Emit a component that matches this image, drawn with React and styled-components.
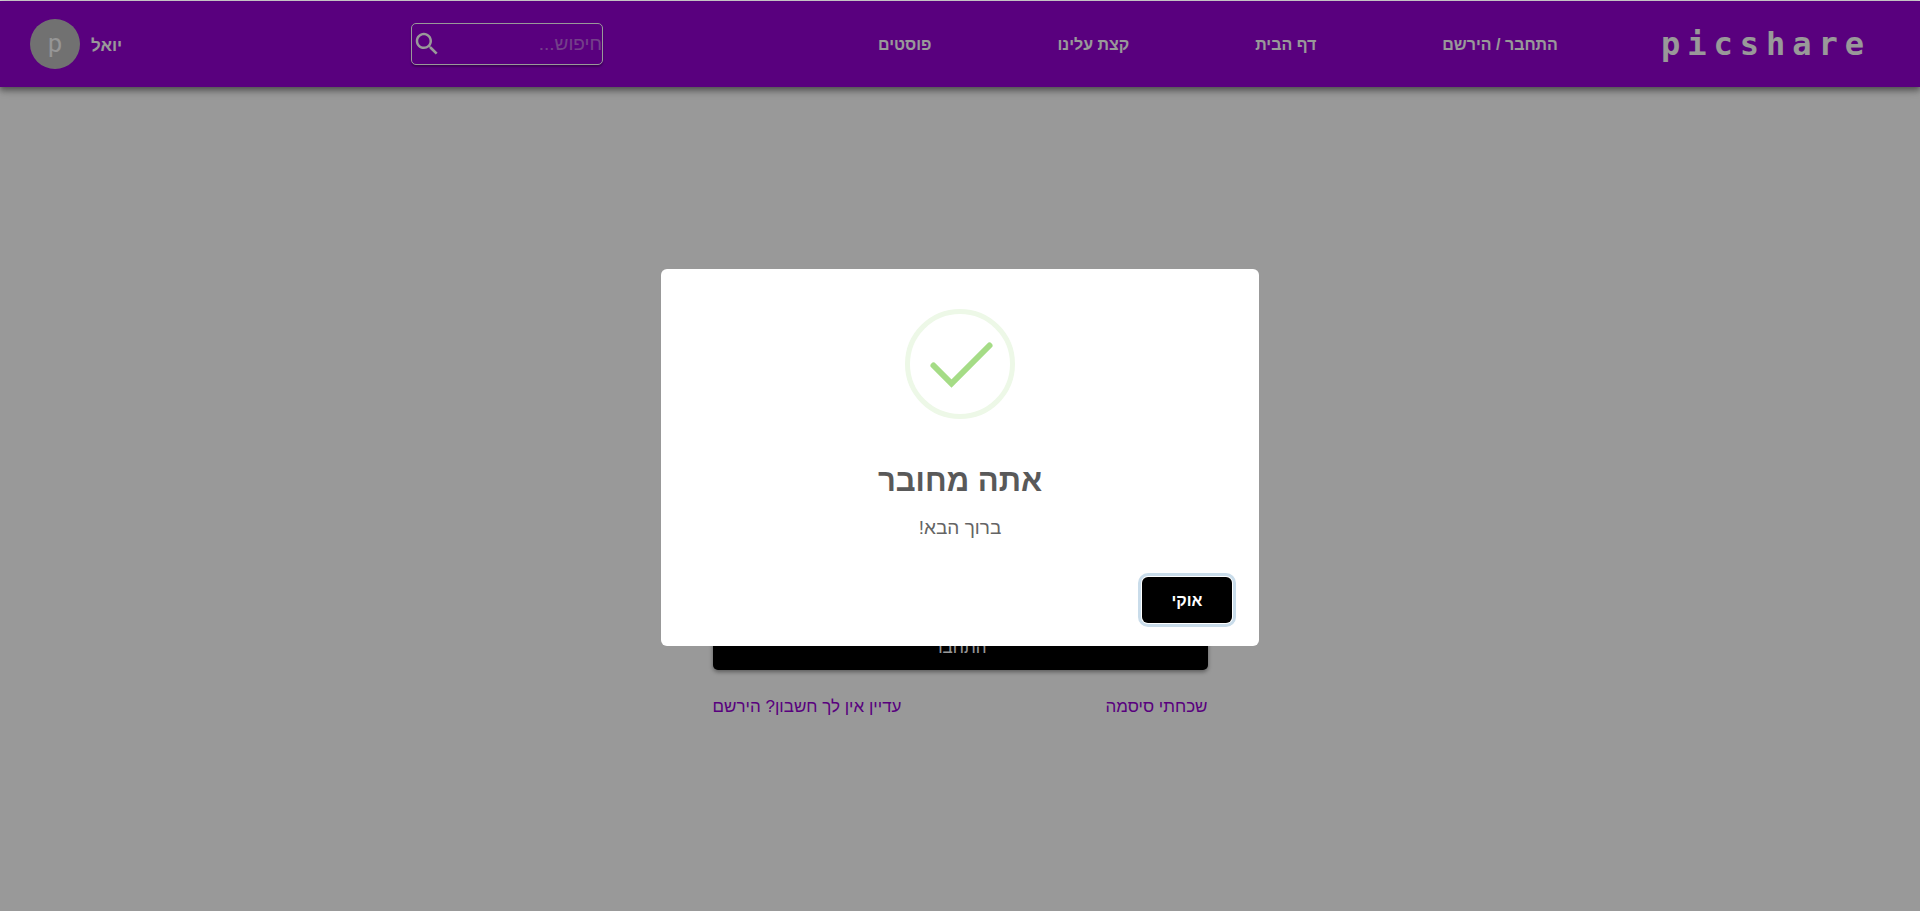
import React from "react";
import styled, { createGlobalStyle } from "styled-components";

const sans = `"Liberation Sans", Arial, sans-serif`;

const GlobalStyle = createGlobalStyle`
  *, *::before, *::after { box-sizing: border-box; }
  body { margin: 0; background: #fff; font-family: ${sans}; }
`;

const Page = styled.div`
  min-height: 100vh;
  border-top: 1px solid #dcdcdc;
`;

const Header = styled.header`
  display: flex;
  align-items: center;
  height: 86px;
  padding-inline: 49px 30px;
  background: #9400d3;
  color: #fff;
  box-shadow: 0 2px 5px rgba(0, 0, 0, 0.3), 0 5px 6px rgba(0, 0, 0, 0.18),
    0 1px 12px rgba(0, 0, 0, 0.14);
`;

const Logo = styled.a`
  direction: ltr;
  color: inherit;
  text-decoration: none;
  font: 700 32px/40px "DejaVu Sans Mono", monospace;
  letter-spacing: 7px;
`;

const Nav = styled.nav`
  display: flex;
  gap: 126px;
  margin-inline-start: 103px;
  padding-top: 2px;
`;

const NavLink = styled.a`
  color: inherit;
  text-decoration: none;
  white-space: nowrap;
  font: 700 16px/24px ${sans};
`;

const Search = styled.label`
  display: flex;
  align-items: center;
  width: 192px;
  height: 42px;
  margin-inline-start: 275px;
  border: 1px solid #fff;
  border-radius: 5px;
  box-shadow: 0 2px 2px rgba(0, 0, 0, 0.3);
`;

const SearchInput = styled.input`
  flex: 1;
  min-width: 0;
  padding: 0;
  border: 0;
  outline: 0;
  background: transparent;
  color: inherit;
  font: 400 19px/28px ${sans};
  &::placeholder { color: #fff; opacity: 0.42; }
`;

const User = styled.div`
  display: flex;
  align-items: center;
  gap: 11px;
  margin-inline-start: auto;
  font: 700 17px/24px ${sans};
`;

const UserName = styled.span`
  padding-top: 4px;
`;

const Avatar = styled.span`
  display: grid;
  place-items: center;
  width: 50px;
  height: 50px;
  border-radius: 50%;
  background: #bdbdbd;
  color: #fafafa;
  font: 400 25px/32px Roboto, sans-serif;
`;

const LoginForm = styled.form`
  width: 495px;
  margin: 0 auto;
  padding-top: 537px;
`;

const SubmitButton = styled.button`
  display: block;
  width: 100%;
  height: 46px;
  padding: 2px 0 0;
  border: 0;
  border-radius: 5px;
  background: #000;
  color: #fff;
  font: 400 17px/24px ${sans};
  box-shadow: 0 2px 4px rgba(0, 0, 0, 0.4);
`;

const LinkRow = styled.div`
  display: flex;
  justify-content: space-between;
  margin-top: 25px;
`;

const FormLink = styled.a`
  color: #9400d3;
  text-decoration: none;
  font: 400 17px/24px ${sans};
`;

const Overlay = styled.div`
  position: fixed;
  inset: 1px 0 0;
  display: grid;
  place-items: center;
  padding-top: 3px;
  background: rgba(0, 0, 0, 0.4);
`;

const Modal = styled.section`
  display: flex;
  flex-direction: column;
  align-items: center;
  width: 598px;
  max-width: 100%;
  padding: 40px 27px 23px;
  border-radius: 6px;
  background: #fff;
`;

const SuccessIcon = styled.svg`
  width: 110px;
  height: 110px;
`;

const Title = styled.h2`
  margin: 40px 0 0;
  color: #595959;
  font: 700 31px/44px ${sans};
`;

const Message = styled.p`
  margin: 13px 0 0;
  color: #646464;
  font: 400 19px/24px ${sans};
`;

const OkButton = styled.button`
  align-self: flex-start;
  width: 90px;
  height: 46px;
  margin-top: 37px;
  padding: 2px 0 0;
  border: 0;
  border-radius: 6px;
  background: #000;
  color: #fff;
  font: 700 16px/24px ${sans};
  box-shadow: 0 0 0 1px #fff, 0 0 0 4px #c9dcea;
`;

const links = ["התחבר / הירשם", "דף הבית", "קצת עלינו", "פוסטים"];

export default function App() {
  return (
    <Page dir="rtl" lang="he">
      <GlobalStyle />
      <Header>
        <Logo href="#">picshare</Logo>
        <Nav>
          {links.map((label) => (
            <NavLink href="#" key={label}>{label}</NavLink>
          ))}
        </Nav>
        <Search>
          <SearchInput type="text" placeholder="חיפוש..." />
          <svg width="30" height="30" viewBox="0 0 24 24" fill="currentColor" aria-hidden="true">
            <path d="M15.5 14h-.79l-.28-.27C15.41 12.59 16 11.11 16 9.5 16 5.91 13.09 3 9.5 3S3 5.91 3 9.5 5.91 16 9.5 16c1.61 0 3.09-.59 4.23-1.57l.27.28v.79l5 4.99L20.49 19l-4.99-5zm-6 0C7.01 14 5 11.99 5 9.5S7.01 5 9.5 5 14 7.01 14 9.5 11.99 14 9.5 14z" />
          </svg>
        </Search>
        <User>
          <UserName>יואל</UserName>
          <Avatar>p</Avatar>
        </User>
      </Header>
      <main>
        <LoginForm>
          <SubmitButton type="button">התחבר</SubmitButton>
          <LinkRow>
            <FormLink href="#">שכחתי סיסמה</FormLink>
            <FormLink href="#">עדיין אין לך חשבון? הירשם</FormLink>
          </LinkRow>
        </LoginForm>
      </main>
      <Overlay>
        <Modal role="dialog" aria-modal="true" aria-labelledby="dialog-title">
          <SuccessIcon viewBox="0 0 110 110" fill="none" aria-hidden="true">
            <circle cx="55" cy="55" r="52.5" stroke="#edf8e7" strokeWidth="5" />
            <path d="M28.5 56.5 46.5 74.5 84.5 36.5" stroke="#a5dc86" strokeWidth="6" strokeLinecap="round" />
          </SuccessIcon>
          <Title id="dialog-title">אתה מחובר</Title>
          <Message>ברוך הבא!</Message>
          <OkButton type="button">אוקי</OkButton>
        </Modal>
      </Overlay>
    </Page>
  );
}
